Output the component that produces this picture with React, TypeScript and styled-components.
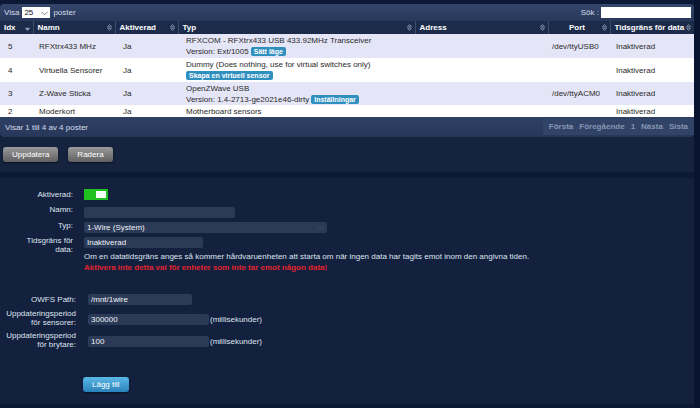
import * as React from "react";
import styled, { createGlobalStyle } from "styled-components";

const GlobalStyle = createGlobalStyle`
	body {
		margin: 0;
		background: #081430;
		font-family: "Liberation Sans", Arial, sans-serif;
		font-size: 8px;
	}
`;

const Page = styled.div`
	width: 694px;
	padding-top: 4px;
	background: #0c1936;
	min-height: 404px;
`;

const Toolbar = styled.div`
	height: 17px;
	display: flex;
	align-items: center;
	justify-content: space-between;
	padding: 0 3px 0 4px;
	background: linear-gradient(#34466b, #27385a);
	border-radius: 4px 4px 0 0;
	color: #d8deea;
`;

const LengthControl = styled.label`
	display: flex;
	align-items: center;
	gap: 3px;
`;

const PageSize = styled.span`
	display: inline-flex;
	align-items: center;
	justify-content: space-between;
	width: 28px;
	height: 11px;
	padding: 0 2px;
	box-sizing: border-box;
	background: #fff;
	color: #111;
	font-size: 8px;
	svg {
		margin-top: 1px;
	}
`;

const SearchControl = styled.label`
	display: flex;
	align-items: center;
	gap: 2px;
`;

const SearchBox = styled.span`
	width: 90px;
	height: 11px;
	background: #fff;
`;

const DataTable = styled.table`
	width: 694px;
	border-collapse: collapse;
	table-layout: fixed;
`;

const Th = styled.th`
	height: 13px;
	padding: 0 3px 0 4px;
	background: #1d2b4a;
	color: #fff;
	font-weight: bold;
	font-size: 8px;
	text-align: left;
	border-left: 1px solid #3b4b6a;
	&:first-child {
		border-left: none;
	}
`;

const HeadInner = styled.div<{ $center?: boolean }>`
	display: flex;
	align-items: center;
	justify-content: space-between;
	span {
		flex: 1;
		text-align: ${(p) => (p.$center ? "center" : "left")};
	}
`;

const Tr = styled.tr<{ $odd: boolean; $h: number }>`
	height: ${(p) => p.$h}px;
	background: ${(p) => (p.$odd ? "#e4e5f6" : "#ffffff")};
`;

const Td = styled.td<{ $pad?: number }>`
	padding: 0 3px 0 ${(p) => p.$pad ?? 4}px;
	color: #2a2a2a;
	font-size: 8px;
	line-height: 11px;
	vertical-align: middle;
	white-space: nowrap;
	overflow: hidden;
`;

const Badge = styled.span<{ $first?: boolean }>`
	display: inline-block;
	margin-left: ${(p) => (p.$first ? 0 : 2)}px;
	padding: 0 3px;
	background: #2f8fbf;
	color: #fff;
	font-weight: bold;
	font-size: 7px;
	line-height: 9px;
	border-radius: 2px;
`;

const TableFooter = styled.div`
	height: 20px;
	display: flex;
	align-items: center;
	justify-content: space-between;
	padding-left: 5px;
	background: linear-gradient(#2f4064, #26375a);
	border-radius: 0 0 4px 4px;
	color: #d8deea;
`;

const Pager = styled.div`
	display: flex;
	align-items: center;
	height: 16px;
	padding: 0 3px;
	background: #314367;
`;

const PageButton = styled.span`
	padding: 0 3px;
	color: #8796b3;
	font-weight: bold;
	font-size: 8px;
	line-height: 14px;
`;

const ActionBar = styled.div`
	height: 35px;
	display: flex;
	align-items: center;
	gap: 10px;
	padding-left: 3px;
	background: #15233f;
`;

const GreyButton = styled.button`
	height: 15px;
	padding: 0 9px;
	border: none;
	border-radius: 3px;
	background: linear-gradient(#9a9a9a, #606060);
	box-shadow: 0 1px 2px rgba(0, 0, 0, 0.5);
	color: #fff;
	font-family: inherit;
	font-size: 8px;
`;

const FormPanel = styled.div`
	margin-top: 6px;
	height: 226px;
	padding-top: 11px;
	box-sizing: border-box;
	background: #13213f;
	color: #dfe4ee;
`;

const FormGrid = styled.div<{ $label: number; $gap: number; $rowGap?: number }>`
	display: grid;
	grid-template-columns: ${(p) => p.$label}px 1fr;
	column-gap: ${(p) => p.$gap}px;
	row-gap: ${(p) => p.$rowGap ?? 0}px;
	align-items: center;
`;

const Label = styled.div<{ $top?: boolean }>`
	text-align: right;
	line-height: 9px;
	align-self: ${(p) => (p.$top ? "start" : "center")};
	padding-top: ${(p) => (p.$top ? 3 : 0)}px;
`;

const Field = styled.div<{ $mt?: number; $stack?: boolean }>`
	display: flex;
	flex-direction: ${(p) => (p.$stack ? "column" : "row")};
	align-items: ${(p) => (p.$stack ? "flex-start" : "center")};
	margin-top: ${(p) => p.$mt ?? 0}px;
	min-height: 11px;
`;

const Toggle = styled.span`
	display: flex;
	justify-content: flex-end;
	align-items: center;
	width: 24px;
	height: 11px;
	padding: 0 2px;
	box-sizing: border-box;
	background: #20c020;
	&::after {
		content: "";
		width: 10px;
		height: 7px;
		background: #f2fff2;
	}
`;

const TextInput = styled.span<{ $w: number }>`
	display: flex;
	align-items: center;
	justify-content: space-between;
	width: ${(p) => p.$w}px;
	height: 11px;
	padding: 0 3px;
	box-sizing: border-box;
	background: #2a3a57;
	border-radius: 2px;
	color: #f2f4f8;
	font-size: 8px;
`;

const Unit = styled.span`
	margin-left: 1px;
`;

const TimeoutBlock = styled.div`
	display: flex;
	flex-direction: column;
	gap: 1px;
	margin-top: 4px;
	line-height: 10px;
	p {
		margin: 0;
	}
`;

const Warning = styled.p`
	color: #e3232b;
	font-weight: bold;
`;

const BlueButton = styled.button`
	margin: 28px 0 0 83px;
	height: 15px;
	padding: 0 9px;
	border: none;
	border-radius: 3px;
	background: linear-gradient(#5ab8e6, #2a82bb);
	box-shadow: 0 1px 2px rgba(0, 0, 0, 0.5);
	color: #fff;
	font-family: inherit;
	font-size: 8px;
`;

const SortIcon = ({ dir }: { dir?: "desc" }) => (
	<svg width="5" height="7" viewBox="0 0 5 7">
		{dir !== "desc" && <path d="M2.5 0.5 L4.5 2.8 H0.5 Z" fill="none" stroke="#9aa6bd" strokeWidth="0.7" />}
		<path d="M2.5 6.5 L4.5 4.2 H0.5 Z" fill={dir === "desc" ? "#9aa6bd" : "none"} stroke="#9aa6bd" strokeWidth="0.7" />
	</svg>
);

const Chevron = ({ color }: { color: string }) => (
	<svg width="7" height="5" viewBox="0 0 7 5">
		<path d="M0.5 0.8 L3.5 3.8 L6.5 0.8" fill="none" stroke={color} strokeWidth="0.8" />
	</svg>
);

const columns = [
	{ title: "Idx", width: 33, dir: "desc" as const },
	{ title: "Namn", width: 82 },
	{ title: "Aktiverad", width: 63 },
	{ title: "Typ", width: 237 },
	{ title: "Adress", width: 133 },
	{ title: "Port", width: 62, center: true },
	{ title: "Tidsgräns för data", width: 84 },
];

type Hardware = {
	idx: number;
	name: string;
	type: string;
	sub?: string;
	button?: string;
	port: string;
	height: number;
};

const hardware: Hardware[] = [
	{
		idx: 5,
		name: "RFXtrx433 MHz",
		type: "RFXCOM - RFXtrx433 USB 433.92MHz Transceiver",
		sub: "Version: Ext/1005",
		button: "Sätt läge",
		port: "/dev/ttyUSB0",
		height: 24,
	},
	{
		idx: 4,
		name: "Virtuella Sensorer",
		type: "Dummy (Does nothing, use for virtual switches only)",
		sub: "",
		button: "Skapa en virtuell sensor",
		port: "",
		height: 24,
	},
	{
		idx: 3,
		name: "Z-Wave Sticka",
		type: "OpenZWave USB",
		sub: "Version: 1.4-2713-ge2021e46-dirty",
		button: "Inställningar",
		port: "/dev/ttyACM0",
		height: 23,
	},
	{ idx: 2, name: "Moderkort", type: "Motherboard sensors", port: "", height: 12 },
];

export default function App() {
	return (
		<>
			<GlobalStyle />
			<Page>
				<Toolbar>
					<LengthControl>
						Visa
						<PageSize>
							25
							<Chevron color="#666" />
						</PageSize>
						poster
					</LengthControl>
					<SearchControl>
						Sök :
						<SearchBox />
					</SearchControl>
				</Toolbar>
				<DataTable>
					<colgroup>
						{columns.map((c) => (
							<col key={c.title} style={{ width: c.width }} />
						))}
					</colgroup>
					<thead>
						<tr>
							{columns.map((c) => (
								<Th key={c.title}>
									<HeadInner $center={c.center}>
										<span>{c.title}</span>
										<SortIcon dir={c.dir} />
									</HeadInner>
								</Th>
							))}
						</tr>
					</thead>
					<tbody>
						{hardware.map((h, i) => (
							<Tr key={h.idx} $odd={i % 2 === 0} $h={h.height}>
								<Td $pad={8}>{h.idx}</Td>
								<Td $pad={6}>{h.name}</Td>
								<Td $pad={8}>Ja</Td>
								<Td $pad={8}>
									<div>{h.type}</div>
									{h.sub !== undefined && (
										<div>
											{h.sub}
											{h.button && <Badge $first={!h.sub}>{h.button}</Badge>}
										</div>
									)}
								</Td>
								<Td />
								<Td>{h.port}</Td>
								<Td $pad={6}>Inaktiverad</Td>
							</Tr>
						))}
					</tbody>
				</DataTable>
				<TableFooter>
					Visar 1 till 4 av 4 poster
					<Pager>
						{["Första", "Föregående", "1", "Nästa", "Sista"].map((p) => (
							<PageButton key={p}>{p}</PageButton>
						))}
					</Pager>
				</TableFooter>
				<ActionBar>
					<GreyButton>Uppdatera</GreyButton>
					<GreyButton>Radera</GreyButton>
				</ActionBar>
				<FormPanel>
					<FormGrid $label={73} $gap={11}>
						<Label>Aktiverad:</Label>
						<Field>
							<Toggle />
						</Field>
						<Label>Namn:</Label>
						<Field $mt={7}>
							<TextInput $w={151} />
						</Field>
						<Label>Typ:</Label>
						<Field $mt={4}>
							<TextInput $w={243}>
								1-Wire (System)
								<Chevron color="#3f4f6c" />
							</TextInput>
						</Field>
						<Label $top>
							Tidsgräns för
							<br />
							data:
						</Label>
						<Field $mt={4} $stack>
							<TextInput $w={119}>Inaktiverad</TextInput>
							<TimeoutBlock>
								<p>
									Om en datatidsgräns anges så kommer hårdvaruenheten att starta om när ingen data har
									tagits emot inom den angivna tiden.
								</p>
								<Warning>Aktivera inte detta val för enheter som inte tar emot någon data!</Warning>
							</TimeoutBlock>
						</Field>
					</FormGrid>
					<FormGrid $label={76} $gap={12} $rowGap={4} style={{ marginTop: 21 }}>
						<Label>OWFS Path:</Label>
						<Field>
							<TextInput $w={104}>/mnt/1wire</TextInput>
						</Field>
						<Label>
							Uppdateringsperiod
							<br />
							för sensorer:
						</Label>
						<Field $mt={3}>
							<TextInput $w={121}>300000</TextInput>
							<Unit>(millisekunder)</Unit>
						</Field>
						<Label>
							Uppdateringsperiod
							<br />
							för brytare:
						</Label>
						<Field $mt={3}>
							<TextInput $w={121}>100</TextInput>
							<Unit>(millisekunder)</Unit>
						</Field>
					</FormGrid>
					<BlueButton>Lägg till</BlueButton>
				</FormPanel>
			</Page>
		</>
	);
}
